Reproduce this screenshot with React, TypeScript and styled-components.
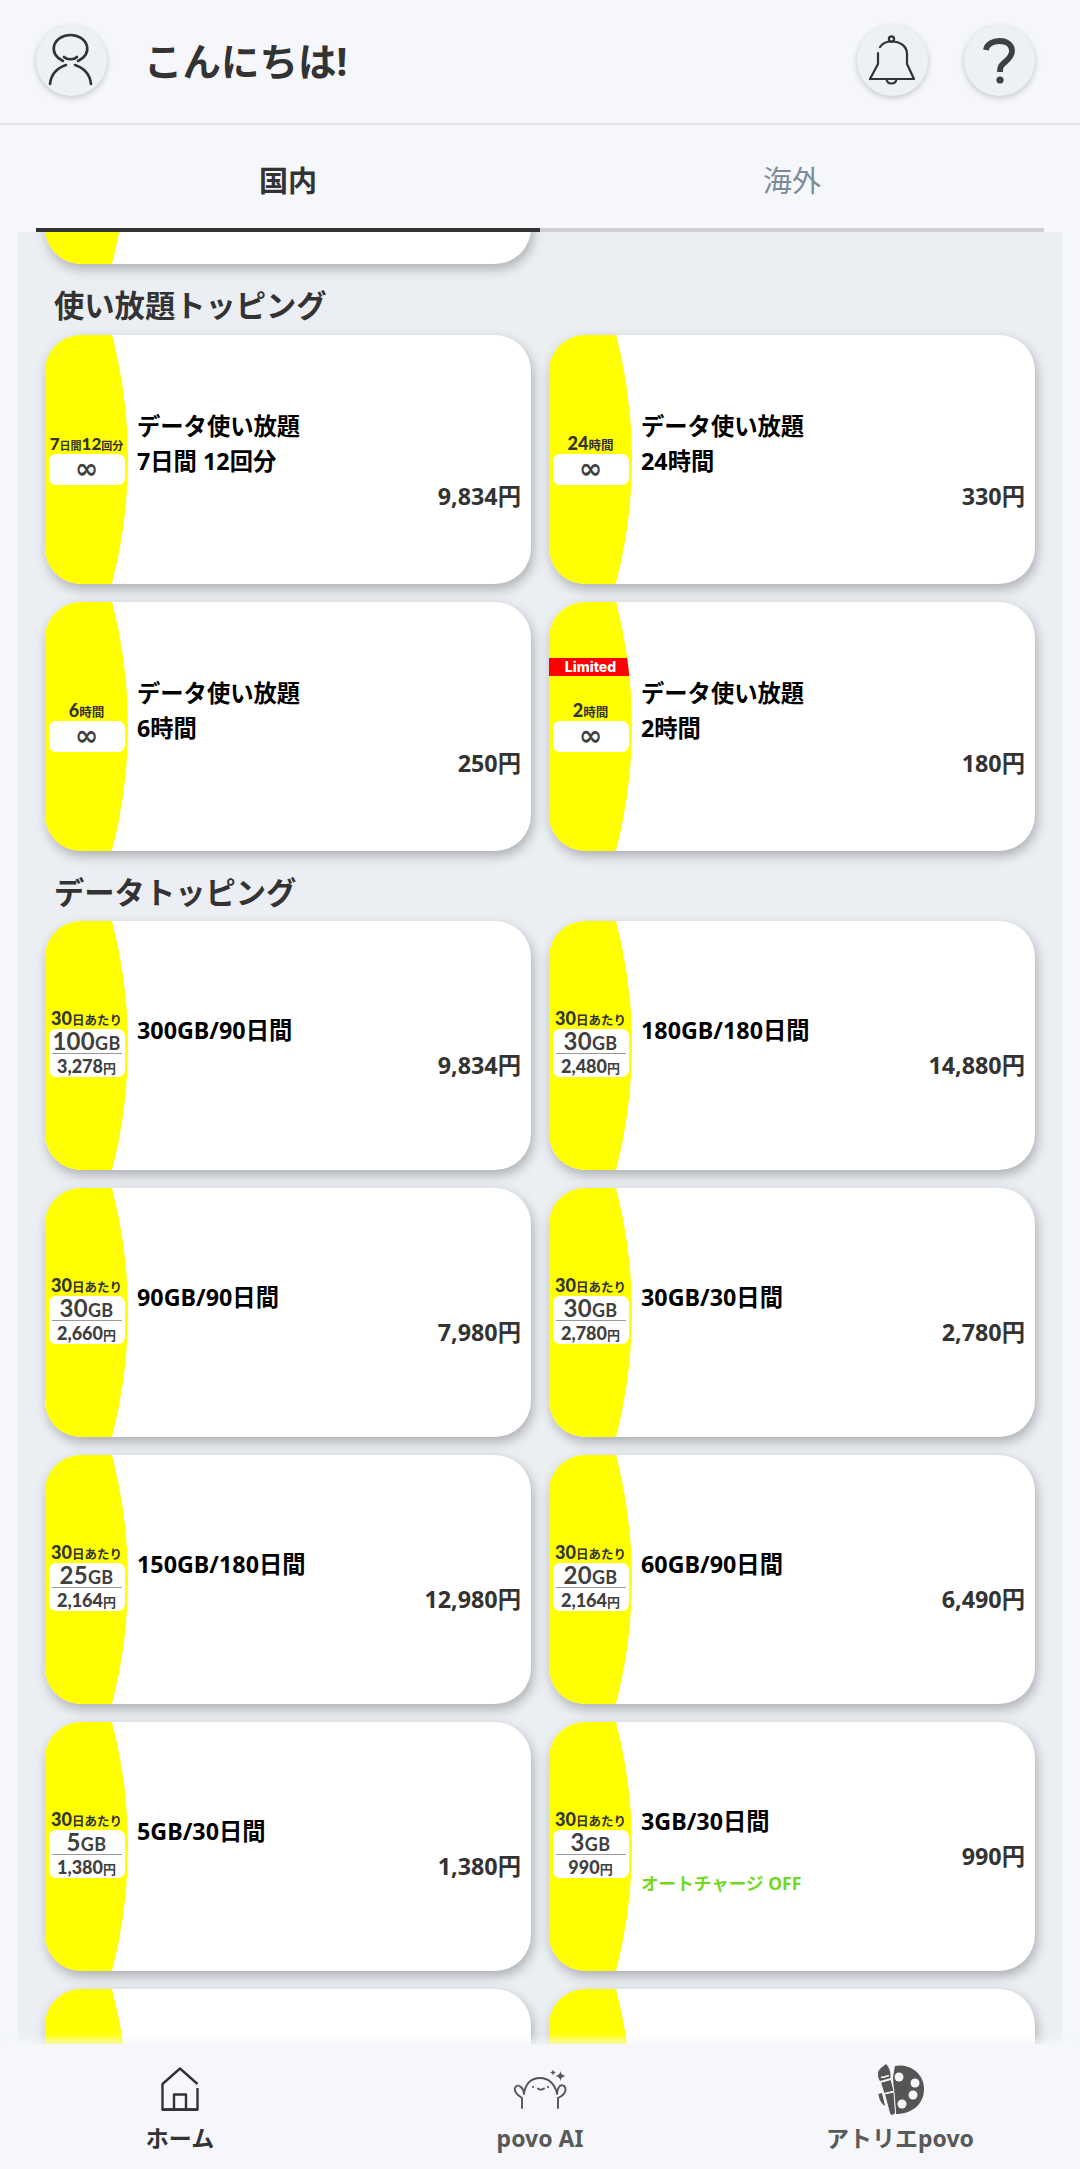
import React from 'react';
import styled, { createGlobalStyle } from 'styled-components';

const Global = createGlobalStyle`
  html, body { margin: 0; padding: 0; background: #f5f7fb; }
  body { font-family: "Noto Sans", "Noto Sans CJK JP", sans-serif; }
  * { box-sizing: border-box; }
`;

const Page = styled.div`
  width: 1080px; height: 2169px; display: flex; flex-direction: column;
  background: #f5f7fb; overflow: hidden; color: #333;
`;
const Header = styled.header`
  height: 125px; flex: none; display: flex; align-items: flex-start;
  padding: 25px 45px 0 36px; border-bottom: 2px solid #e1e3e7;
`;
const RoundButton = styled.div`
  width: 71px; height: 71px; flex: none; border-radius: 50%;
  background: #edf0f4; box-shadow: 0 2px 6px rgba(0,0,0,.2);
  margin-left: ${p => p.$gap ?? 0}px;
  svg { display: block; }
`;
const Greeting = styled.h1`
  flex: 1; margin: 0 0 0 37px; font-size: 38.5px; line-height: 73px; font-weight: 700; color: #333;
`;
const Tabs = styled.nav`
  height: 107px; flex: none; margin: 0 36px; display: flex;
`;
const Tab = styled.div`
  flex: 1; display: flex; align-items: center; justify-content: center; padding-top: 4px;
  font-size: 29px; font-weight: ${p => p.$active ? 700 : 400};
  color: ${p => p.$active ? '#333' : '#7b8b99'};
  border-bottom: 4px solid ${p => p.$active ? '#333' : '#cdcfd2'};
`;
const Scroll = styled.main`
  flex: 1; min-height: 0; margin: 0 18px; background: #ebeef3; overflow: hidden; padding: 0 27px;
`;
const Content = styled.div`
  margin-top: -217px;
`;
const Heading = styled.h2`
  margin: 0; height: 70.5px; padding: 21px 0 0 9px; font-size: 30.3px; line-height: 42px;
  font-weight: 700; color: #333;
`;
const Grid = styled.div`
  display: grid; grid-template-columns: 486px 486px; gap: 18px;
`;
const Card = styled.article`
  position: relative; height: 249px; display: flex; background: #fff; border-radius: 36px;
  box-shadow: 2px 5px 12px rgba(0,0,0,.27); overflow: hidden;
`;
const Panel = styled.div`
  position: relative; width: 83px; flex: none; background: #ff0;
  clip-path: circle(488.5px at -405.5px 50%);
  display: flex; flex-direction: column; align-items: center; justify-content: center;
  padding-bottom: ${p => p.$data ? 5 : 0}px;
`;
const Ribbon = styled.div`
  position: absolute; top: 56px; left: 0; right: 0; height: 18px; background: #f00; color: #fff;
  font-family: Inter, sans-serif; font-size: 14px; font-weight: 800; line-height: 18px;
  text-align: center;
`;
const BadgeLabel = styled.div`
  height: 20px; line-height: 19px; white-space: nowrap; color: #333;
  font-family: Lato, "Noto Sans CJK JP", sans-serif; font-weight: 700;
  font-size: ${p => p.$tight ? 11 : 12.5}px;
  b { font-size: ${p => p.$tight ? 17 : 18}px; font-weight: 900; }
`;
const BadgeBox = styled.div`
  width: 76px; background: #fff; border-radius: 7px; display: flex; flex-direction: column;
  align-items: center; color: #404040;
`;
const InfinityMark = styled.div`
  height: 31px; line-height: 29px; font-family: "DejaVu Sans", sans-serif; font-weight: 700; font-size: 28px;
`;
const Amount = styled.div`
  height: 24px; line-height: 24px; font-family: Lato, "Noto Sans CJK JP", sans-serif; font-weight: 700;
  font-size: 24px; letter-spacing: .3px; white-space: nowrap;
  small { font-size: 18px; }
`;
const Yen = styled.div`
  width: 70px; border-top: 1px solid #9a9a9a; height: 24px; line-height: 24px; text-align: center;
  font-family: Lato, "Noto Sans CJK JP", sans-serif; font-weight: 900; font-size: 18px; white-space: nowrap;
  small { font-size: 13px; font-weight: 700; }
`;
const Body = styled.div`
  flex: 1; min-width: 0; display: flex; flex-direction: column; justify-content: center; padding: 3px 10px 0 9px;
`;
const Title = styled.div`
  font-size: 23.3px; line-height: 35px; font-weight: 700; color: #000; white-space: nowrap;
`;
const Price = styled.div`
  font-size: 23.3px; line-height: 34px; font-weight: 700; color: #333; text-align: right;
`;
const Note = styled.div`
  font-size: 17.6px; line-height: 20px; font-weight: 700; color: #74d81c; white-space: nowrap;
`;
const Nav = styled.footer`
  height: 125px; flex: none; display: grid; grid-template-columns: repeat(3, 360px);
  background: #f5f7fb; position: relative; box-shadow: 0 -5px 7px rgba(245,247,251,.7);
`;
const NavItem = styled.div`
  display: flex; flex-direction: column; align-items: center;
  svg { display: block; }
`;
const NavIcon = styled.div`
  height: 78px; display: flex; align-items: center; justify-content: center; padding-top: 12px;
`;
const NavLabel = styled.div`
  font-size: 23px; line-height: 32px; font-weight: 700; color: ${p => p.$active ? '#333' : '#595959'};
`;

const Avatar = () => (
  <svg width="71" height="71" viewBox="0 0 71 71" fill="none" stroke="#333" strokeWidth="2.6" strokeLinecap="round">
    <path d="M27 36C19 32 17 26 18 21C20 14 27 10 34.5 10C42 10 49 14 51 21C52 26 50 32 42 36" />
    <path d="M28 32C31 35 38 35 41 32" />
    <path d="M14 59C15 50 21 43 30 40M55 59C54 50 48 43 39 40" />
  </svg>
);
const Bell = () => (
  <svg width="71" height="71" viewBox="0 0 71 71" fill="none" stroke="#333" strokeWidth="2.2" strokeLinecap="round" strokeLinejoin="round">
    <circle cx="34.5" cy="14" r="2.6" />
    <path d="M13 54H57L50 39V29C50 21 43 16.5 34.5 16.5C29 16.5 25 19 23 22" />
    <path d="M21 28V39L13 54" />
    <path d="M29.5 54C30 60 39 60 39.5 54" />
  </svg>
);
const Question = () => (
  <svg width="71" height="71" viewBox="0 0 71 71" fill="none" stroke="#3d3f42" strokeWidth="5.8">
    <path d="M22 25C23 19 29 16 35.5 16C43 16 48 20 48 26C48 32 43 35 40 38C37 40.5 36 42 36 47" />
    <circle cx="36" cy="55" r="3.6" fill="#3d3f42" stroke="none" />
  </svg>
);
const HomeIcon = () => (
  <svg width="38" height="44" viewBox="0 0 38 44" fill="none" stroke="#333" strokeWidth="2.4" strokeLinejoin="round">
    <path d="M36.500 17L19 1.500L1.500 17V42.500H36.500V21" />
    <path d="M13 42V27.500H25V42" />
    <path d="M1 42.600H37" strokeWidth="2.800" />
  </svg>
);
const AiIcon = () => (
  <svg width="54" height="40" viewBox="0 0 54 40" fill="none" stroke="#555" strokeWidth="1.900" strokeLinecap="round">
    <path d="M11 24C13 14 19 9 27 9C35 9 41 14 44 24" />
    <path d="M9 29C4 26 1 23 2 19C3 16 6 16 8 18C10 20 11 23 11 25M9 29V39" />
    <path d="M45 29C49 27 53 24 52.500 20C52 16 48 15 46 18C44.500 20 44 23 44 25M45 29V39" />
    <path d="M25 19.500C26 21 29 21 31 19.500" />
    <circle cx="20" cy="18" r="1.100" fill="#555" stroke="none" />
    <circle cx="35" cy="18" r="1.100" fill="#555" stroke="none" />
    <path d="M40 0C40 2 41 3 43 3.500C41 4 40 5 40 7C40 5 39 4 37 3.500C39 3 40 2 40 0Z" fill="#555" stroke="none" />
    <path d="M47.500 1C47.500 4.500 49 6 52.500 7C49 8 47.500 9.500 47.500 13C47.500 9.500 46 8 42.500 7C46 6 47.500 4.500 47.500 1Z" fill="#555" stroke="none" />
  </svg>
);
const PaletteIcon = () => (
  <svg width="49" height="53" viewBox="0 0 49 53" fill="#555">
    <path d="M19 3C33 0 48 10 48 26C48 41 36 51 20 51L18 30L17 14Z" />
    <circle cx="23" cy="14" r="4.500" fill="#f5f7fb" />
    <circle cx="39" cy="20" r="4.500" fill="#f5f7fb" />
    <circle cx="37" cy="32" r="4.500" fill="#f5f7fb" />
    <circle cx="26" cy="41" r="4.500" fill="#f5f7fb" />
    <path d="M8.500 31L18 29L19.500 50C17.500 53 14.500 53 13.500 50Z" stroke="#f5f7fb" strokeWidth="1" />
    <path d="M4.500 19.500L15 16.500L18 28L8 30.500Z" stroke="#f5f7fb" strokeWidth="1" />
    <path d="M2 10C3 5 7 4 10 1C13 4 15 9 14.500 15L4 18C2 15 2 13 2 10Z" />
    <path d="M5 14C8 15.500 11 12 13 13" stroke="#f5f7fb" strokeWidth="1.500" fill="none" />
    <path d="M2.500 31L6 30L9 43C6 41 3 37 2.500 31Z" />
  </svg>
);

type Item = {
  title: string[]; price: string; note?: string; limited?: boolean; tight?: boolean;
  label?: React.ReactNode; gb?: string; yen?: string;
};
const per = <><b>30</b>日あたり</>;
const hours = (n: string) => <><b>{n}</b>時間</>;

const unlimited: Item[] = [
  { title: ['データ使い放題', '7日間 12回分'], price: '9,834円', label: <><b>7</b>日間<b>12</b>回分</>, tight: true },
  { title: ['データ使い放題', '24時間'], price: '330円', label: hours('24') },
  { title: ['データ使い放題', '6時間'], price: '250円', label: hours('6') },
  { title: ['データ使い放題', '2時間'], price: '180円', label: hours('2'), limited: true },
];
const data: Item[] = [
  { title: ['300GB/90日間'], price: '9,834円', label: per, gb: '100', yen: '3,278' },
  { title: ['180GB/180日間'], price: '14,880円', label: per, gb: '30', yen: '2,480' },
  { title: ['90GB/90日間'], price: '7,980円', label: per, gb: '30', yen: '2,660' },
  { title: ['30GB/30日間'], price: '2,780円', label: per, gb: '30', yen: '2,780' },
  { title: ['150GB/180日間'], price: '12,980円', label: per, gb: '25', yen: '2,164' },
  { title: ['60GB/90日間'], price: '6,490円', label: per, gb: '20', yen: '2,164' },
  { title: ['5GB/30日間'], price: '1,380円', label: per, gb: '5', yen: '1,380' },
  { title: ['3GB/30日間'], price: '990円', label: per, gb: '3', yen: '990', note: 'オートチャージ OFF' },
  { title: [''], price: '', },
  { title: [''], price: '', },
];

const TopCard = ({ item }: { item: Item }) => (
  <Card>
    <Panel $data={!!item.gb}>
      {item.limited && <Ribbon>Limited</Ribbon>}
      {item.label && <BadgeLabel $tight={item.tight}>{item.label}</BadgeLabel>}
      {item.label && (
        <BadgeBox>
          {item.gb ? (
            <>
              <Amount>{item.gb}<small>GB</small></Amount>
              <Yen>{item.yen}<small>円</small></Yen>
            </>
          ) : (
            <InfinityMark>∞</InfinityMark>
          )}
        </BadgeBox>
      )}
    </Panel>
    <Body>
      {item.title.map(t => <Title key={t}>{t}</Title>)}
      <Price>{item.price}</Price>
      {item.note && <Note>{item.note}</Note>}
    </Body>
  </Card>
);

export default function App() {
  return (
    <Page>
      <Global />
      <Header>
        <RoundButton><Avatar /></RoundButton>
        <Greeting>こんにちは!</Greeting>
        <RoundButton><Bell /></RoundButton>
        <RoundButton $gap={36}><Question /></RoundButton>
      </Header>
      <Tabs>
        <Tab $active>国内</Tab>
        <Tab>海外</Tab>
      </Tabs>
      <Scroll>
        <Content>
          <Grid><TopCard item={{ title: [''], price: '' }} /></Grid>
          <Heading>使い放題トッピング</Heading>
          <Grid>{unlimited.map((it, i) => <TopCard key={i} item={it} />)}</Grid>
          <Heading>データトッピング</Heading>
          <Grid>{data.map((it, i) => <TopCard key={i} item={it} />)}</Grid>
        </Content>
      </Scroll>
      <Nav>
        <NavItem><NavIcon><HomeIcon /></NavIcon><NavLabel $active>ホーム</NavLabel></NavItem>
        <NavItem><NavIcon><AiIcon /></NavIcon><NavLabel>povo AI</NavLabel></NavItem>
        <NavItem><NavIcon><PaletteIcon /></NavIcon><NavLabel>アトリエpovo</NavLabel></NavItem>
      </Nav>
    </Page>
  );
}
